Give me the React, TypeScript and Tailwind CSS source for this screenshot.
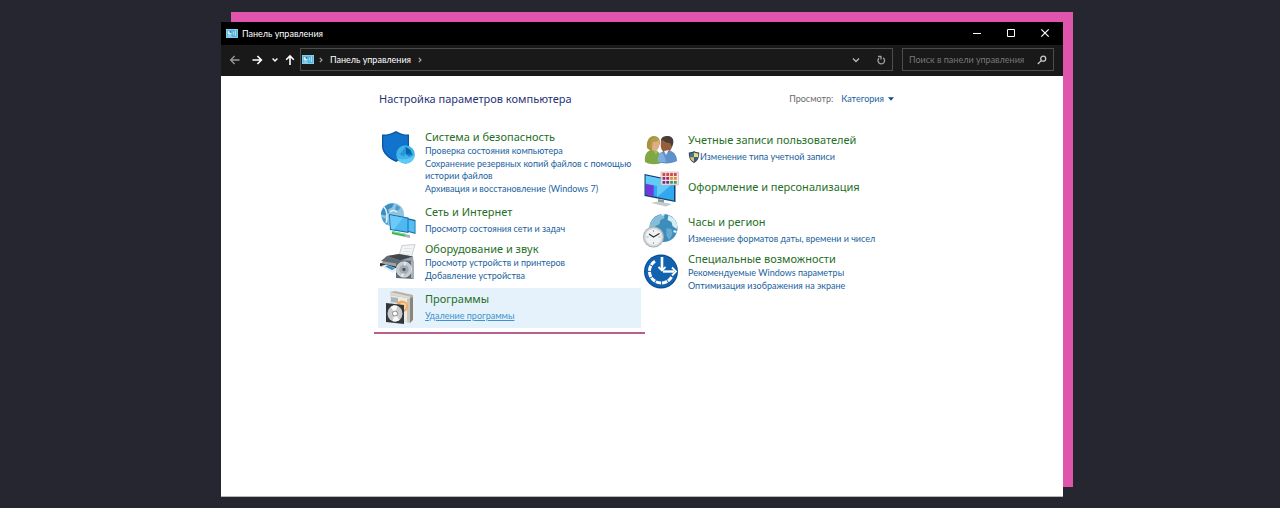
import { useState, type ReactNode } from 'react';
import clsx from 'clsx';

type Category = {
  title: string;
  icon: ReactNode;
  links: { text: string; shield?: boolean }[];
  active?: boolean;
  className?: string;
};

const PanelIcon = ({ className }: { className?: string }) => (
  <svg viewBox="0 0 12 10" className={clsx('h-[10px] w-3 flex-none', className)}>
    <rect width="12" height="9" fill="#8fd2ee" />
    <rect x="0.8" y="0.800" width="10.4" height="7.400" fill="#58b4dc" />
    <circle cx="3.6" cy="3.8" r="2" fill="#d8f1fb" />
    <path d="M3.6 3.8V1.8a2 2 0 0 1 2 2z" fill="#1c6fa5" />
    <path d="M1.6 7h4" stroke="#e9f8ff" strokeWidth="0.7" />
    <path d="M9.400 1.400v5.600M7.400 2.600v3" stroke="#b9e4f6" strokeWidth="0.900" />
  </svg>
);

const Chevron = ({ className }: { className?: string }) => (
  <svg viewBox="0 0 8 8" className={clsx('size-2 flex-none', className)} fill="none" stroke="currentColor">
    <path d="M2.8 1.800 5 4 2.8 6.200" strokeWidth="1.200" />
  </svg>
);

const SecurityIcon = () => (
  <svg viewBox="0 0 36 36" className="size-9">
    <path d="M16 2c4 2.600 8 3.700 13 3.600V17c0 7-5 12.500-13 16C8 29.500 2 24 2 17V5.600C7.500 5.700 12 4.600 16 2z" fill="#0b559f" />
    <path d="M16 3.500c4 2.200 7.500 3.200 11.800 3.300V17c0 6.200-4.500 11.200-11.800 14.400C8.500 28 3.300 23 3.300 17V6.800C8 6.700 12 5.700 16 3.500z" fill="#1173cb" />
    <circle cx="25.500" cy="25.500" r="9.300" fill="#3fb4ea" />
    <path d="M17 29a9.300 9.300 0 0 0 17.800-3.500c-3 4-11.800 6.500-17.800 3.500z" fill="#5ccaf4" />
    <path d="M25.500 25V17.500l5 3.500 2 5-4-.5z" fill="#0b63ac" />
    <path d="m19.500 25.500 6-8V25l-2 2.500z" fill="#2a97da" />
    <path d="m25.500 25 6.500 1-3 1.800z" fill="#1a7fca" />
  </svg>
);

const NetworkIcon = () => (
  <svg viewBox="0 0 36 36" className="size-9">
    <circle cx="12.500" cy="11.500" r="11.500" fill="#8fc3df" />
    <path d="M3 5.500c3-4 7-5.500 11-5l-2 4-4 2 1 3-4 3-4-1c0-2 .5-4 2-6z" fill="#3c8fc4" />
    <path d="m16 2 4 2-1 3-4 1zM2 14l4 2 2 5-1 1c-3-2-5-5-5-8z" fill="#4b9ccc" />
    <path d="M10 9c2-2 5-2 7 0M4 4c3 3 4 10 2 16" stroke="#e5f4fa" strokeWidth="1.300" fill="none" />
    <path d="m25 14.500 10.500 2.500v14L25 28z" fill="#1565a5" />
    <path d="m26 16 8.700 2.200v11.500L26 27.300z" fill="#53bff1" />
    <path d="m9 11 19.500 3.500V30L10 27z" fill="#1b6fb0" />
    <path d="m10 12.300 17.500 3.200v13.200L11 26z" fill="#4db9f0" />
    <path d="m10 12.300 13 2.400L14 26.500 11 26z" fill="#6ccaf6" />
    <path d="m12 28 14 3v3l-14-3z" fill="#3fb554" />
    <path d="m12 28 14 3v1l-14-3z" fill="#92e29c" />
    <path d="m25 31 5 1v3l-5-1z" fill="#a9b3ba" />
  </svg>
);

const HardwareIcon = () => (
  <svg viewBox="0 0 36 36" className="size-9">
    <path d="M22 1.500 35 .5l-3.500 12-13 1z" fill="#f4f5f6" stroke="#b5babd" strokeWidth="0.700" />
    <path d="M24 4.500h8M23 7.500h8M22 10.200h8" stroke="#d8dcde" strokeWidth="0.700" />
    <path d="m7 12 12-2 14 2.500 1 10-14 5L0 21z" fill="#9ca3a9" />
    <path d="m7 12 12-2 14 2.500-13 4z" fill="#40474d" />
    <path d="m1 17 6-5 13 4.500V20z" fill="#626b72" />
    <path d="m0 19 18 4v4L0 22z" fill="#2c3136" />
    <path d="m1 22 5-1.500L18 25l-5 4z" fill="#e9eef1" />
    <path d="m5 22.200 3-.8 7 3-3 1.500z" fill="#268dc8" />
    <path d="M16 16 34 17v18l-18-1z" fill="#5f6b75" />
    <path d="m31 17 3 0v18l-3-1z" fill="#a9b1b6" />
    <circle cx="24" cy="25.500" r="7.700" fill="#c4cbd0" stroke="#e7eaec" strokeWidth="0.700" />
    <circle cx="24" cy="25.500" r="4.700" fill="#a2abb3" />
    <circle cx="24" cy="25.500" r="1.700" fill="#4d5861" />
    <path d="m24.500 21.500 1-3.500M23.500 29.500l-2 3" stroke="#edf1f3" strokeWidth="1.500" />
  </svg>
);

const ProgramsIcon = () => (
  <svg viewBox="0 0 36 36" className="size-9">
    <path d="m11 5 19 3v25l-19-6z" fill="#ebe9e3" stroke="#c5c2b9" strokeWidth="0.500" />
    <path d="m10 2 5-1 18 4v2.500l-3 1L10 5z" fill="#b8b3a8" />
    <path d="m10 2 20 4.500v2L10 5z" fill="#ddd9ce" />
    <path d="m30 8 3-1v23l-3 3z" fill="#8b867c" />
    <path d="m27 8.500 3 .5v24l-3-2z" fill="#c9c6be" />
    <path d="m11 7 7 1v5l-7-1z" fill="#a9b4b8" />
    <circle cx="22" cy="16.500" r="6" fill="#f1a962" />
    <circle cx="23" cy="16" r="3.300" fill="#f9cf9e" />
    <path d="m6 13 18 2v19L6 32z" fill="#34373a" />
    <ellipse cx="15" cy="23.500" rx="7.500" ry="8" fill="#c9cccd" />
    <path d="m15 23.500-4.500-6.500c2.500-2 5-2 7-1zM15 23.500 19.500 30c-2 1.500-5 2-7 1z" fill="#f7f8f8" />
    <circle cx="15" cy="23.500" r="2.500" fill="#fff" stroke="#7b8184" strokeWidth="0.900" />
  </svg>
);

const UsersIcon = () => (
  <svg viewBox="0 0 36 36" className="size-9">
    <path d="M2 31c-1-7 2-12 7-12 6 0 10 4 11 12-5 3-13 3-18 0z" fill="#7fa845" />
    <path d="M4 17C3 10 6 5 11 5c4 0 6 3 6 7l-2 5-6 4z" fill="#a8923f" />
    <path d="M9 10c3 0 5-1 6-2 2 2 2 7 0 10-1 2-4 2.500-6 1z" fill="#e0ae86" />
    <path d="M8 9c2-3 6-4 8-1-1 3-4 3-6 3l-1 6-2-1z" fill="#b59d48" />
    <path d="M15 31c0-7 3-11 9-12 6 0 10 5 10 11-5 3-14 3-19 1z" fill="#5f91c9" />
    <path d="M18 21c2 1 4 4 5 10h-8c-1-4 1-8 3-10z" fill="#7fadde" />
    <path d="M18 10c1-4 4-5 7-4 4 1 5 5 4 10-1 4-4 6-7 5-3 0-5-4-4-11z" fill="#955f3d" />
    <path d="M18 10c0-4 3-5 7-5 5 0 7 5 4 11l-2-4c-3 0-6-1-7-3z" fill="#4b3d35" />
    <path d="m21 20 5-1-3 5z" fill="#edf2f8" />
    <path d="m10 19 5 1-2 4z" fill="#99bf61" />
  </svg>
);

const AppearanceIcon = () => (
  <svg viewBox="0 0 36 36" className="size-9">
    <path d="m1.500 3 31 6.500v21.500L1.500 25z" fill="#173f6c" />
    <path d="m2.700 4.600 28.300 6v18.800L2.700 23.800z" fill="#31a8ef" />
    <path d="m2.700 4.600 28.300 6v1L14 26V15L2.700 12.500z" fill="#65c9f6" />
    <path d="m2.700 13 8 1.600v10.700l-8-1.500z" fill="#7136dc" />
    <path d="m15 28 6 1v3l-6-1z" fill="#8f979d" />
    <path d="m8 32 7-1.500 14 2.500-6 2.500z" fill="#c3cace" />
    <path d="M18 1H35.500v13H18z" fill="#f1e6e4" stroke="#c8acb4" strokeWidth="0.600" />
    <path d="M19.500 3.500h14.500" stroke="#cd4b50" strokeWidth="2.800" strokeDasharray="2.800 1" />
    <path d="M19.500 7.400h6.600" stroke="#a52b65" strokeWidth="2.800" strokeDasharray="2.800 1" />
    <path d="M27.100 7.400h6.600" stroke="#e68b31" strokeWidth="2.800" strokeDasharray="2.800 1" />
    <path d="M19.500 11.300h6.600" stroke="#5f328e" strokeWidth="2.800" strokeDasharray="2.800 1" />
    <path d="M27.100 11.300h6.600" stroke="#3d9b63" strokeWidth="2.800" strokeDasharray="2.800 1" />
  </svg>
);

const ClockIcon = () => (
  <svg viewBox="0 0 36 36" className="size-9">
    <circle cx="20.500" cy="15" r="14" fill="#3c8dbb" />
    <path d="M8.500 8c3-4 8-7 12-7l1 4-4 2-1 4-4 2-2 4-4-1c0-3 0-5 2-8z" fill="#86bed9" />
    <path d="m25.500 2 6 4 3 6-1 4-4-3-1-4-4-2z" fill="#d4edf5" />
    <path d="m23.500 15 5 1 1 5-3 6-3-4z" fill="#66abd0" />
    <path d="M18.500 1.500h3M30.500 18l3 1" stroke="#e8f6fa" strokeWidth="2" />
    <circle cx="10.500" cy="24" r="10.500" fill="#a9aeb1" />
    <circle cx="10.500" cy="24" r="9.500" fill="#d8dbdd" />
    <circle cx="10.500" cy="24" r="7.800" fill="#f2f3f4" />
    <path d="M10.500 17v2M10.500 29v2M3.500 24h2M15.500 24h2" stroke="#92989c" strokeWidth="0.800" />
    <path d="m6 21 4.500 3 6-3.500" stroke="#30363a" strokeWidth="1.300" fill="none" />
  </svg>
);

const AccessibilityIcon = () => (
  <svg viewBox="0 0 36 36" className="size-9">
    <circle cx="18" cy="17.500" r="17" fill="#0b4d94" />
    <circle cx="18" cy="17.500" r="15.800" fill="#1263af" />
    <path
      d="M12 7.200A11.800 11.800 0 1 0 28.800 22.500"
      fill="none"
      stroke="#fff"
      strokeWidth="3"
      strokeDasharray="5.300 0.900"
    />
    <path d="M19 3v13" stroke="#fff" strokeWidth="2.600" />
    <path d="M20 17.500h11" stroke="#fff" strokeWidth="2.400" />
    <path d="m15.500 13 3.500 3.500 3.500-3.500" fill="none" stroke="#fff" strokeWidth="1.800" />
    <path d="m29 13.500 4 4-4 4" fill="none" stroke="#fff" strokeWidth="1.800" />
  </svg>
);

const ShieldBadge = () => (
  <svg viewBox="0 0 12 12" className="size-3 flex-none">
    <path d="M6 0c1.600 1 3.200 1.400 5.200 1.500C11.400 6.500 9.700 10.200 6 12 2.300 10.200.6 6.500.8 1.500 2.800 1.400 4.400 1 6 0z" fill="#3f4b50" />
    <path d="M6 1.400v4.800H2C1.800 5 1.700 3.800 1.800 2.600 3.400 2.500 4.700 2.100 6 1.400z" fill="#3f7397" />
    <path d="M6 1.400v4.800h4c.2-1.200.3-2.400.2-3.600C8.600 2.500 7.300 2.100 6 1.400z" fill="#eadb8b" />
    <path d="M6 6.200v4.500C4 9.700 2.600 8.200 2 6.200z" fill="#dcc96a" />
    <path d="M6 6.200v4.500c2-1 3.400-2.500 4-4.500z" fill="#2b5f84" />
  </svg>
);

const leftColumn: Category[] = [
  {
    title: 'Система и безопасность',
    icon: <SecurityIcon />,
    links: [
      { text: 'Проверка состояния компьютера' },
      { text: 'Сохранение резервных копий файлов с помощью истории файлов' },
      { text: 'Архивация и восстановление (Windows 7)' },
    ],
  },
  {
    title: 'Сеть и Интернет',
    icon: <NetworkIcon />,
    links: [{ text: 'Просмотр состояния сети и задач' }],
    className: 'mt-2',
  },
  {
    title: 'Оборудование и звук',
    icon: <HardwareIcon />,
    links: [{ text: 'Просмотр устройств и принтеров' }, { text: 'Добавление устройства' }],
    className: 'mt-0.5',
  },
  {
    title: 'Программы',
    icon: <ProgramsIcon />,
    links: [{ text: 'Удаление программы' }],
    active: true,
    className: 'mt-1.5',
  },
];

const rightColumn: Category[] = [
  {
    title: 'Учетные записи пользователей',
    icon: <UsersIcon />,
    links: [{ text: 'Изменение типа учетной записи', shield: true }],
  },
  {
    title: 'Оформление и персонализация',
    icon: <AppearanceIcon />,
    links: [],
    className: 'mt-1',
  },
  {
    title: 'Часы и регион',
    icon: <ClockIcon />,
    links: [{ text: 'Изменение форматов даты, времени и чисел' }],
    className: 'mt-1.5',
  },
  {
    title: 'Специальные возможности',
    icon: <AccessibilityIcon />,
    links: [{ text: 'Рекомендуемые Windows параметры' }, { text: 'Оптимизация изображения на экране' }],
    className: 'mt-0.5',
  },
];

const CategoryItem = ({ title, icon, links, active, className }: Category) => {
  const compact = links.length > 1;

  return (
    <section
      className={clsx(
        'relative flex gap-[9px] pl-0.5',
        links.length > 2 ? 'items-start' : 'items-center',
        active && 'bg-[#e5f2fb] py-0.5',
        className,
      )}
    >
      <div className="flex-none">{icon}</div>
      <div className={clsx('min-w-0 flex-1', !compact && 'pb-1')}>
        <h2 className="font-['Noto_Sans',sans-serif] text-[11px] leading-4 text-[#1f6f26]">
          <a href="#">{title}</a>
        </h2>
        {links.length > 0 && (
          <ul className={clsx('flex flex-col gap-px', !compact && 'mt-[3px]')}>
            {links.map((link) => (
              <li key={link.text} className="flex items-center text-[9px] leading-3 text-[#1a5f9e]">
                {link.shield && <ShieldBadge />}
                <a href="#" className={clsx(active && 'text-[#3f93cc] underline')}>
                  {link.text}
                </a>
              </li>
            ))}
          </ul>
        )}
      </div>
      {active && <div className="absolute -right-1 -left-1 top-full mt-1 h-0.5 bg-[#b85f8e]" />}
    </section>
  );
};

const TitleBar = () => (
  <header className="flex h-[23px] items-center bg-black pr-3 pl-[5px] text-white">
    <PanelIcon />
    <h1 className="ml-1 flex-1 text-[9px] leading-3">Панель управления</h1>
    <div className="flex gap-[22px]">
      <button type="button" aria-label="Свернуть">
        <svg viewBox="0 0 12 12" className="size-3" stroke="currentColor">
          <path d="M2 5.500h8" />
        </svg>
      </button>
      <button type="button" aria-label="Развернуть">
        <svg viewBox="0 0 12 12" className="size-3" fill="none" stroke="currentColor">
          <path d="M2.500 1.500h7v7h-7z" />
        </svg>
      </button>
      <button type="button" aria-label="Закрыть">
        <svg viewBox="0 0 12 12" className="size-3" stroke="currentColor" strokeWidth="1.200">
          <path d="m2.300 1.300 7.400 7.400M9.700 1.300 2.300 8.700" />
        </svg>
      </button>
    </div>
  </header>
);

const AddressBar = () => {
  const [query, setQuery] = useState('');

  return (
    <nav className="flex h-[31px] items-center bg-[#191919] pr-[9px] pb-0.5 pl-2 text-white">
      <button type="button" aria-label="Назад" className="text-[#9a9a9a]">
        <svg viewBox="0 0 12 12" className="size-3" fill="none" stroke="currentColor" strokeWidth="1.300">
          <path d="M10.500 6H1.800M5.600 2 1.600 6l4 4" />
        </svg>
      </button>
      <button type="button" aria-label="Вперед" className="ml-2.5">
        <svg viewBox="0 0 12 12" className="size-3" fill="none" stroke="currentColor" strokeWidth="1.600">
          <path d="M1.500 6h8.700M6.400 2l4 4-4 4" />
        </svg>
      </button>
      <button type="button" aria-label="Последние расположения" className="ml-2">
        <svg viewBox="0 0 8 8" className="size-2" fill="none" stroke="currentColor" strokeWidth="1.400">
          <path d="M1.600 2.600 4 5l2.400-2.400" />
        </svg>
      </button>
      <button type="button" aria-label="Вверх" className="ml-[5px]">
        <svg viewBox="0 0 12 12" className="size-3" fill="none" stroke="currentColor" strokeWidth="1.600">
          <path d="M6 11V2M2.200 5.800 6 2l3.800 3.800" />
        </svg>
      </button>
      <div className="ml-1 flex h-[23px] min-w-0 flex-1 items-center border border-[#4d4d4d] pr-1.5 pl-px">
        <PanelIcon />
        <Chevron className="ml-[3px] text-[#a8a8a8]" />
        <a href="#" className="ml-[5px] text-[9px] leading-3 text-white">
          Панель управления
        </a>
        <Chevron className="ml-[5px] text-[#a8a8a8]" />
        <button type="button" aria-label="Предыдущие расположения" className="ml-auto text-[#b5b5b5]">
          <svg viewBox="0 0 10 10" className="size-2.5" fill="none" stroke="currentColor" strokeWidth="1.400">
            <path d="m2 3.500 3 3 3-3" />
          </svg>
        </button>
        <button type="button" aria-label="Обновить" className="ml-[15px] text-[#a0a0a0]">
          <svg viewBox="0 0 10 10" className="size-2.5" fill="none" stroke="currentColor" strokeWidth="1.300">
            <path d="M7.200 2.900A3.300 3.300 0 1 1 3 3.200M2 1.500h3v3" />
          </svg>
        </button>
      </div>
      <div className="ml-[9px] flex h-[23px] w-[152px] items-center border border-[#4d4d4d] pr-1.5 pl-1.5">
        <input
          type="text"
          aria-label="Поиск в панели управления"
          placeholder="Поиск в панели управления"
          value={query}
          onChange={(e) => setQuery(e.target.value)}
          className="h-4 min-w-0 flex-1 bg-transparent text-[9px] leading-4 outline-none placeholder:text-[#777777]"
        />
        <button type="button" aria-label="Найти" className="text-[#c8c8c8]">
          <svg viewBox="0 0 10 10" className="size-2.5" fill="none" stroke="currentColor" strokeWidth="1.300">
            <circle cx="6.200" cy="3.700" r="2.500" />
            <path d="M4.300 5.600.8 9" />
          </svg>
        </button>
      </div>
    </nav>
  );
};

export default function App() {
  return (
    <div className="flex min-h-screen justify-center bg-[#262630] pt-[22px] pb-[11px] pl-1 font-['Lato','Noto_Sans',sans-serif]">
      <div className="flex w-full max-w-[842px] flex-col bg-white shadow-[10px_-10px_0_0_#e055ac]">
        <TitleBar />
        <AddressBar />
        <main className="flex-1 border-b border-[#b8b8b8] pt-3.5 pr-0.5 pb-6">
          <div className="mx-auto max-w-[526px]">
            <div className="flex items-center justify-between pr-2 pl-px">
              <h2 className="font-['Noto_Sans',sans-serif] text-[11px] leading-[18px] text-[#1f3477]">
                Настройка параметров компьютера
              </h2>
              <div className="relative flex items-center text-[9px] leading-3">
                <label htmlFor="view" className="text-[#6a6a6a]">
                  Просмотр:
                </label>
                <select id="view" className="ml-2 field-sizing-content appearance-none bg-transparent pr-3 text-[#1a5f9e]">
                  <option>Категория</option>
                  <option>Крупные значки</option>
                  <option>Мелкие значки</option>
                </select>
                <svg viewBox="0 0 6 4" className="pointer-events-none absolute right-0.5 h-1 w-1.5" fill="#0f4c81">
                  <path d="M0 .3h6L3 3.700z" />
                </svg>
              </div>
            </div>
            <div className="mt-[21px] grid grid-cols-2">
              <div>
                {leftColumn.map((item) => (
                  <CategoryItem key={item.title} {...item} />
                ))}
              </div>
              <div className="pt-0.5">
                {rightColumn.map((item) => (
                  <CategoryItem key={item.title} {...item} />
                ))}
              </div>
            </div>
          </div>
        </main>
      </div>
    </div>
  );
}
